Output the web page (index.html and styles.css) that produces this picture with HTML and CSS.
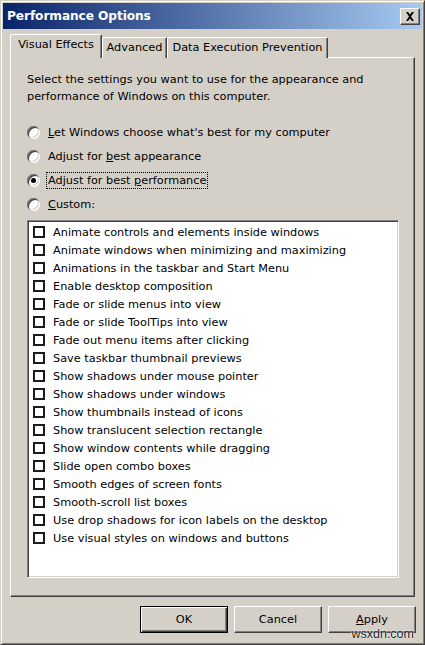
FILE: index.html
```html
<!DOCTYPE html>
<html>
<head>
<meta charset="utf-8">
<link rel="stylesheet" href="styles.css">
</head>
<body>
<div class="window">
  <div class="titlebar">
    <span class="title">Performance Options</span>
    <span class="close"><svg width="10" height="9" viewBox="0 0 10 9"><path d="M1 0h2l2 2.5L7 0h2L6 4.5 9 9H7L5 6.5 3 9H1l3-4.5z" fill="#000"/></svg></span>
  </div>
  <div class="content">
    <div class="tabs">
      <div class="tab active" style="width:92px">Visual Effects</div>
      <div class="tab" style="width:65px">Advanced</div>
      <div class="tab" style="width:161px">Data Execution Prevention</div>
    </div>
    <div class="panel">
      <p class="desc">Select the settings you want to use for the appearance and<br>performance of Windows on this computer.</p>
      <div class="radios">
        <div class="radio-row"><span class="radio"></span><span class="lbl"><u>L</u>et Windows choose what's best for my computer</span></div>
        <div class="radio-row"><span class="radio"></span><span class="lbl">Adjust for <u>b</u>est appearance</span></div>
        <div class="radio-row"><span class="radio checked"></span><span class="lbl focus">Adjust for best <u>p</u>erformance</span></div>
        <div class="radio-row"><span class="radio"></span><span class="lbl"><u>C</u>ustom:</span></div>
      </div>
      <div class="list">
        <div class="item"><span class="cb"></span>Animate controls and elements inside windows</div>
        <div class="item"><span class="cb"></span>Animate windows when minimizing and maximizing</div>
        <div class="item"><span class="cb"></span>Animations in the taskbar and Start Menu</div>
        <div class="item"><span class="cb"></span>Enable desktop composition</div>
        <div class="item"><span class="cb"></span>Fade or slide menus into view</div>
        <div class="item"><span class="cb"></span>Fade or slide ToolTips into view</div>
        <div class="item"><span class="cb"></span>Fade out menu items after clicking</div>
        <div class="item"><span class="cb"></span>Save taskbar thumbnail previews</div>
        <div class="item"><span class="cb"></span>Show shadows under mouse pointer</div>
        <div class="item"><span class="cb"></span>Show shadows under windows</div>
        <div class="item"><span class="cb"></span>Show thumbnails instead of icons</div>
        <div class="item"><span class="cb"></span>Show translucent selection rectangle</div>
        <div class="item"><span class="cb"></span>Show window contents while dragging</div>
        <div class="item"><span class="cb"></span>Slide open combo boxes</div>
        <div class="item"><span class="cb"></span>Smooth edges of screen fonts</div>
        <div class="item"><span class="cb"></span>Smooth-scroll list boxes</div>
        <div class="item"><span class="cb"></span>Use drop shadows for icon labels on the desktop</div>
        <div class="item"><span class="cb"></span>Use visual styles on windows and buttons</div>
      </div>
    </div>
    <div class="buttons">
      <button class="btn default">OK</button>
      <button class="btn">Cancel</button>
      <button class="btn"><u>A</u>pply</button>
    </div>
  </div>
  <div class="watermark">wsxdn.com</div>
</div>
</body>
</html>
```
FILE: styles.css
```css
html, body {
  margin: 0;
  padding: 0;
  background: #d4d0c8;
}
body {
  width: 425px;
  height: 645px;
  overflow: hidden;
  font-family: "DejaVu Sans", Verdana, sans-serif;
  font-size: 11.3px;
  color: #000;
}
.window {
  position: relative;
  box-sizing: border-box;
  width: 425px;
  height: 645px;
  border: 1px solid;
  border-color: #d4d0c8 #404040 #404040 #d4d0c8;
  box-shadow: inset 1px 1px #fff, inset -1px -1px #808080;
  padding: 2px;
  display: flex;
  flex-direction: column;
}
.titlebar {
  height: 26px;
  background: linear-gradient(to right, #0a246a, #a6caf0);
  display: flex;
  align-items: center;
  justify-content: space-between;
  padding: 0 2px 0 4px;
}
.title {
  color: #fff;
  font-weight: bold;
  font-size: 12.2px;
  letter-spacing: -0.1px;
}
.close {
  width: 20px;
  height: 17px;
  box-sizing: border-box;
  background: #d4d0c8;
  border: 1px solid;
  border-color: #fff #404040 #404040 #fff;
  box-shadow: inset -1px -1px #808080;
  display: flex;
  align-items: center;
  justify-content: center;
}
.content {
  flex: 1;
  padding: 6px 0 0 7px;
  display: flex;
  flex-direction: column;
}
.tabs {
  display: flex;
  align-items: flex-end;
  height: 23px;
  position: relative;
  z-index: 1;
  margin-bottom: -1px;
}
.tab {
  box-sizing: border-box;
  height: 21px;
  border: 1px solid;
  border-bottom: none;
  border-color: #fff #404040 transparent #fff;
  box-shadow: inset -1px 0 #808080;
  border-radius: 2px 2px 0 0;
  background: #d4d0c8;
  display: flex;
  align-items: center;
  justify-content: center;
  padding-bottom: 1px;
}
.tab.active {
  height: 24px;
  padding-bottom: 4px;
}
.panel {
  box-sizing: border-box;
  width: 405px;
  height: 540px;
  border: 1px solid;
  border-color: #fff #404040 #404040 #fff;
  box-shadow: inset -1px -1px #808080;
  padding: 13px 15px 0 16px;
}
.desc {
  margin: 0;
  line-height: 17px;
}
.radios {
  margin-top: 15px;
}
.radio-row {
  height: 24px;
  display: flex;
  align-items: center;
}
.radio {
  width: 13px;
  height: 13px;
  border-radius: 50%;
  background: #fff;
  box-shadow: inset 1px 1px #808080, inset 2px 2px #404040, inset -1px -1px #fff, inset -2px -2px #d4d0c8;
  margin-left: 0;
  margin-right: 7px;
  display: flex;
  align-items: center;
  justify-content: center;
}
.radio.checked::after {
  content: "";
  width: 5px;
  height: 5px;
  border-radius: 50%;
  background: #000;
}
.lbl {
  padding: 1px 1px;
  border: 1px solid transparent;
  margin-left: -1px;
}
.lbl.focus {
  border: 1px dotted #000;
}
.list {
  margin-top: 4px;
  box-sizing: border-box;
  width: 372px;
  height: 358px;
  background: #fff;
  border: 1px solid;
  border-color: #808080 #fff #fff #808080;
  box-shadow: inset 1px 1px #404040, inset -1px -1px #d4d0c8;
  padding: 2px 0 0 5px;
}
.item {
  height: 18px;
  display: flex;
  align-items: center;
}
.cb {
  box-sizing: border-box;
  width: 12px;
  height: 12px;
  border: 2px solid #1c1c1c;
  background: #fff;
  margin-right: 8px;
}
.buttons {
  display: flex;
  justify-content: flex-end;
  gap: 6px;
  width: 406px;
  margin-top: 9px;
}
.btn {
  box-sizing: border-box;
  width: 88px;
  height: 27px;
  margin: 0;
  padding: 0;
  font-family: inherit;
  font-size: inherit;
  color: #000;
  background: #d4d0c8;
  border: 1px solid;
  border-color: #fff #404040 #404040 #fff;
  box-shadow: inset -1px -1px #808080;
}
.btn.default {
  border: 1px solid #000;
  box-shadow: inset 1px 1px #fff, inset -1px -1px #404040, inset -2px -2px #808080;
}
.watermark {
  position: absolute;
  right: 10px;
  bottom: 3px;
  font-family: "Liberation Sans", Arial, sans-serif;
  font-size: 12.5px;
  color: #222;
  text-shadow: 0 0 2px #fff, 0 0 1px #fff;
}
```
